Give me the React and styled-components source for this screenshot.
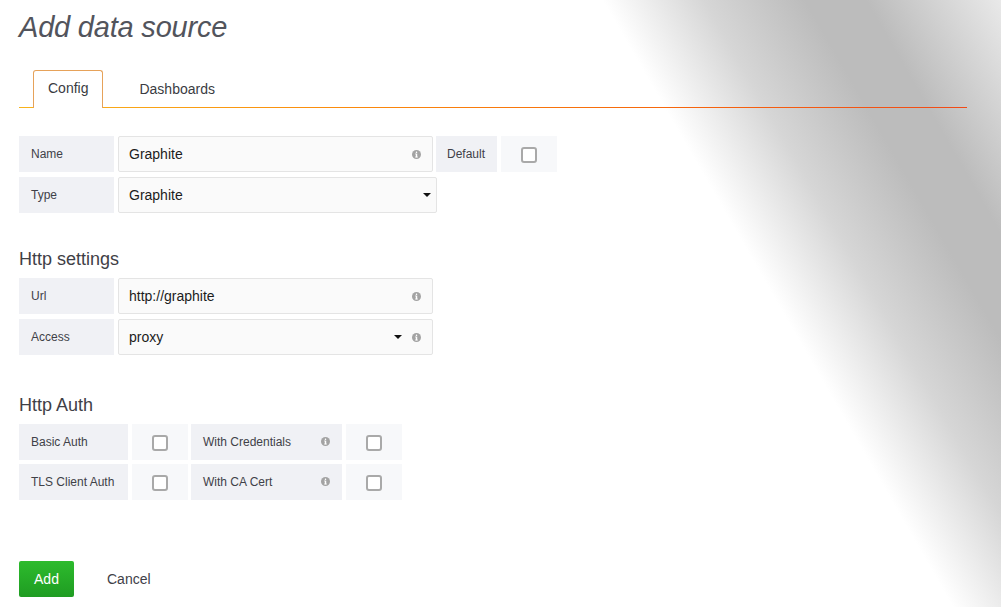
import React from "react";
import styled, { createGlobalStyle } from "styled-components";

const Global = createGlobalStyle`
  html, body { margin: 0; padding: 0; }
  body { font-family: "Liberation Sans", Arial, sans-serif; }
`;

const Page = styled.div`
  min-height: 607px;
  box-sizing: border-box;
  padding: 10px 0 0 19px;
  background: linear-gradient(
    60deg,
    #ffffff 0%,
    #ffffff 70.5%,
    #d6d6d6 78%,
    #bcbcbc 85.5%,
    #bcbcbc 90%,
    #e9e9e9 100%
  );
`;

const Title = styled.h1`
  margin: 0;
  font-size: 29px;
  line-height: 34px;
  font-style: italic;
  font-weight: 400;
  color: #52545c;
  letter-spacing: -0.2px;
`;

const TabBar = styled.div`
  display: flex;
  align-items: flex-end;
  gap: 20px;
  margin-top: 26px;
  margin-right: 34px;
  padding-left: 14px;
  height: 38px;
  background: linear-gradient(to right, #f8b31c 0%, #fb8a0c 35%, #f66a0c 65%, #f04a17 100%)
    left bottom / 100% 1px no-repeat;
`;

const Tab = styled.div`
  box-sizing: border-box;
  height: ${(p) => (p.$active ? "38px" : "37px")};
  display: flex;
  align-items: center;
  padding: 0 ${(p) => (p.$active ? "14px" : "15px")} ${(p) => (p.$active ? "3px" : "2px")};
  font-size: 14px;
  color: #3a3c42;
  background: ${(p) => (p.$active ? "#fff" : "transparent")};
  border: 1px solid ${(p) => (p.$active ? "#e6a25a" : "transparent")};
  border-bottom: none;
  border-radius: 3px 3px 0 0;
`;

const Section = styled.div`
  display: flex;
  flex-direction: column;
  gap: ${(p) => p.$gap || 5}px;
  margin-top: ${(p) => p.$top || 0}px;
`;

const Heading = styled.h3`
  margin: ${(p) => p.$top || 0}px 0 0;
  font-size: 18px;
  line-height: 22px;
  font-weight: 400;
  color: #3f4046;
`;

const Row = styled.div`
  display: flex;
  height: 36px;
`;

const Label = styled.div`
  box-sizing: border-box;
  width: ${(p) => p.$w}px;
  margin-right: ${(p) => (p.$mr !== undefined ? p.$mr : 4)}px;
  height: 36px;
  display: flex;
  align-items: center;
  padding: 0 ${(p) => (p.$pr !== undefined ? p.$pr : 0)}px 1px ${(p) => p.$pl || 12}px;
  background: #f0f1f5;
  font-size: 12px;
  color: #3f4148;
  gap: 4px;
`;

const LabelText = styled.span`
  flex: 1;
`;

const Field = styled.div`
  box-sizing: border-box;
  width: ${(p) => p.$w}px;
  margin-right: ${(p) => (p.$mr !== undefined ? p.$mr : 0)}px;
  height: 36px;
  display: flex;
  align-items: center;
  padding: 0 ${(p) => p.$pr || 12}px 0 10px;
  background: #fafafa;
  border: 1px solid #e4e4e4;
  border-radius: 2px;
  font-size: 14px;
  color: #1c1c1c;
  gap: 10px;
`;

const FieldText = styled.span`
  flex: 1;
`;

const CheckCell = styled.div`
  box-sizing: border-box;
  width: 56px;
  height: 36px;
  margin-right: ${(p) => p.$mr || 0}px;
  display: flex;
  align-items: center;
  justify-content: center;
  background: #f7f8fa;
`;

const Box = styled.span`
  box-sizing: border-box;
  width: 16px;
  height: 16px;
  border: 2px solid #a9a9a9;
  border-radius: 3px;
  background: #fff;
  margin-top: 1px;
`;

const Actions = styled.div`
  display: flex;
  align-items: center;
  gap: 33px;
  margin-top: 61px;
`;

const AddButton = styled.button`
  box-sizing: border-box;
  width: 55px;
  height: 36px;
  border: none;
  border-radius: 2px;
  background: linear-gradient(to bottom, #2dbb2d, #1f9c22);
  color: #fff;
  font-family: inherit;
  font-size: 14px;
  padding: 0;
`;

const CancelLink = styled.span`
  font-size: 14px;
  color: #3f4148;
`;

const Info = () => (
  <svg width="9" height="9" viewBox="0 0 10 10" style={{ flex: "none" }}>
    <circle cx="5" cy="5" r="5" fill="#a3a3a3" />
    <rect x="4.2" y="1.7" width="1.6" height="1.5" rx="0.5" fill="#fff" />
    <rect x="4.2" y="4" width="1.6" height="4.2" fill="#fff" />
    <rect x="3.4" y="4" width="1" height="0.8" fill="#fff" />
    <rect x="3.4" y="7.4" width="3.2" height="0.8" fill="#fff" />
  </svg>
);

const Caret = () => (
  <svg width="8" height="4" viewBox="0 0 8 4" style={{ flex: "none" }}>
    <path d="M0 0 L8 0 L4 4 Z" fill="#111" />
  </svg>
);

export default function App() {
  return (
    <Page>
      <Global />
      <Title>Add data source</Title>
      <TabBar>
        <Tab $active>Config</Tab>
        <Tab>Dashboards</Tab>
      </TabBar>

      <Section $top={28}>
        <Row>
          <Label $w={95}>Name</Label>
          <Field $w={315} $mr={3} $pr={11}>
            <FieldText>Graphite</FieldText>
            <Info />
          </Field>
          <Label $w={61} $pl={11}>Default</Label>
          <CheckCell>
            <Box />
          </CheckCell>
        </Row>
        <Row>
          <Label $w={95}>Type</Label>
          <Field $w={319} $pr={5}>
            <FieldText>Graphite</FieldText>
            <Caret />
          </Field>
        </Row>
      </Section>

      <Heading $top={35}>Http settings</Heading>
      <Section $top={8}>
        <Row>
          <Label $w={95}>Url</Label>
          <Field $w={315} $pr={11}>
            <FieldText>http://graphite</FieldText>
            <Info />
          </Field>
        </Row>
        <Row>
          <Label $w={95}>Access</Label>
          <Field $w={315} $pr={11}>
            <FieldText>proxy</FieldText>
            <Caret />
            <Info />
          </Field>
        </Row>
      </Section>

      <Heading $top={39}>Http Auth</Heading>
      <Section $top={8} $gap={4}>
        <Row>
          <Label $w={109}>Basic Auth</Label>
          <CheckCell $mr={3}>
            <Box />
          </CheckCell>
          <Label $w={151} $pr={12}>
            <LabelText>With Credentials</LabelText>
            <Info />
          </Label>
          <CheckCell>
            <Box />
          </CheckCell>
        </Row>
        <Row>
          <Label $w={109}>TLS Client Auth</Label>
          <CheckCell $mr={3}>
            <Box />
          </CheckCell>
          <Label $w={151} $pr={12}>
            <LabelText>With CA Cert</LabelText>
            <Info />
          </Label>
          <CheckCell>
            <Box />
          </CheckCell>
        </Row>
      </Section>

      <Actions>
        <AddButton>Add</AddButton>
        <CancelLink>Cancel</CancelLink>
      </Actions>
    </Page>
  );
}
